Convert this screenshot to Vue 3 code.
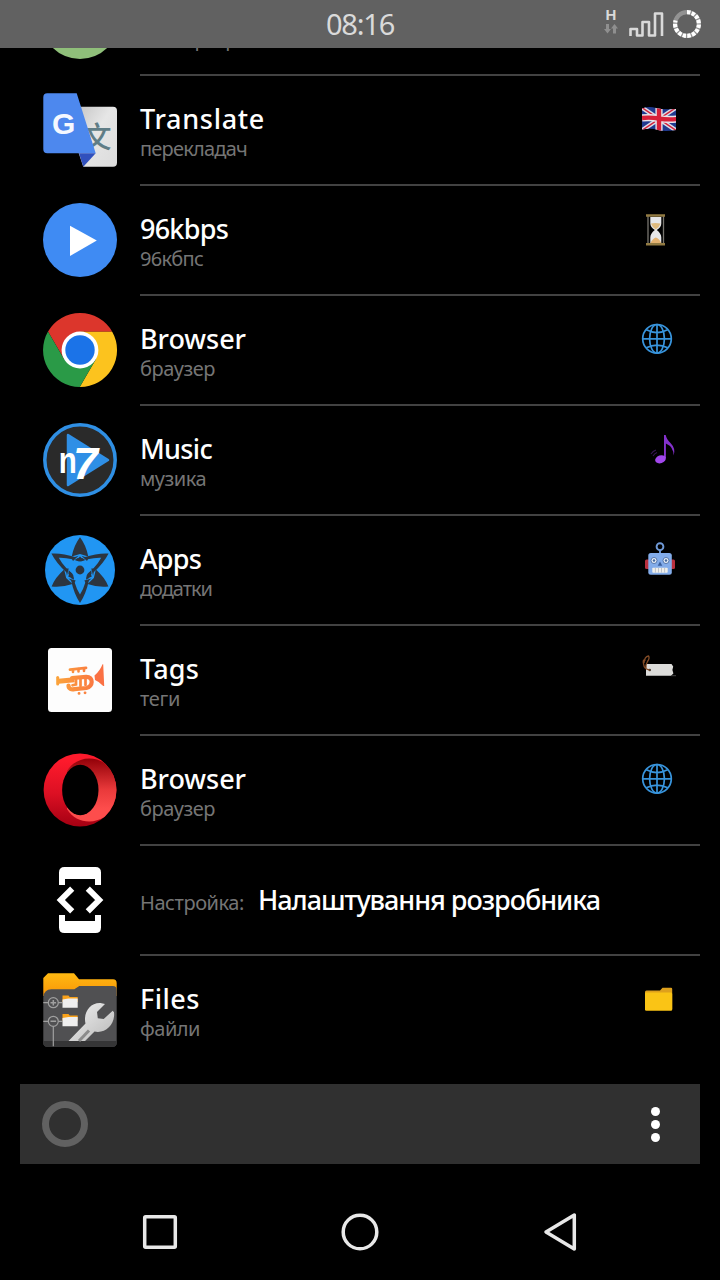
<script setup>
import { ref } from 'vue'

// titleWidth / noteWidth are the widths each label should fill, in px
const rows = ref([
  { id: 1, icon: 'green', title: '', note: 'конвертер', titleWidth: 0, noteWidth: 97, tag: null },
  { id: 2, icon: 'translate', title: 'Translate', note: 'перекладач', titleWidth: 125, noteWidth: 107, tag: 'flag' },
  { id: 3, icon: 'play', title: '96kbps', note: '96кбпс', titleWidth: 88, noteWidth: 63, tag: 'hourglass' },
  { id: 4, icon: 'chrome', title: 'Browser', note: 'браузер', titleWidth: 106, noteWidth: 75, tag: 'globe' },
  { id: 5, icon: 'n7', title: 'Music', note: 'музика', titleWidth: 72, noteWidth: 66, tag: 'note' },
  { id: 6, icon: 'star', title: 'Apps', note: 'додатки', titleWidth: 61, noteWidth: 72, tag: 'robot' },
  { id: 7, icon: 'trumpet', title: 'Tags', note: 'теги', titleWidth: 59, noteWidth: 40, tag: 'label' },
  { id: 8, icon: 'opera', title: 'Browser', note: 'браузер', titleWidth: 106, noteWidth: 75, tag: 'globe' },
  { id: 9, icon: 'dev', title: 'Налаштування розробника', note: 'Настройка:', titleWidth: 342, noteWidth: 104, inline: true, tag: null },
  { id: 10, icon: 'files', title: 'Files', note: 'файли', titleWidth: 60, noteWidth: 60, tag: 'folder' },
])

// spreads the letters so that the label takes the given width
const vFit = {
  mounted(el, { value }) {
    const count = el.textContent.length
    if (!value || !count) return
    const width = el.getBoundingClientRect().width
    el.style.letterSpacing = `${(value - width) / count}px`
  },
}
</script>

<template>
  <div class="screen">
    <header class="status">
      <span class="clock" v-fit="68">08:16</span>
      <div class="status-icons">
        <div class="net">
          <span class="net-type">H</span>
          <svg width="14" height="10" viewBox="0 0 14 10" fill="#8f8f8f">
            <path d="M2 0h3v5h2l-3.5 4.5L0 5h2z" />
            <path d="M9 9.500h3v-5h2L10.500 0 7 4.500h2z" />
          </svg>
        </div>
        <svg width="36" height="26" viewBox="0 0 36 26" fill="none" stroke="#dadada" stroke-width="2.600">
          <path d="M1.500 25v-7h6.500v6.500h5.500V11h6.500v13.500h6V2.500h7V25" stroke-linejoin="round" />
        </svg>
        <svg class="battery" width="30" height="30" viewBox="0 0 30 30" fill="none" stroke-width="4.200">
          <circle cx="15" cy="15" r="11.900" stroke="#929292" />
          <path d="M15 3.100A11.900 11.900 0 1 1 3.600 11.500" stroke="#fff" stroke-dasharray="3.500 1.250" />
        </svg>
      </div>
    </header>

    <main class="list">
      <div v-for="row in rows" :key="row.id" class="row">
        <div class="icon">
          <svg width="80" height="80" viewBox="0 0 80 80">
            <circle v-if="row.icon === 'green'" cx="40" cy="40" r="39" fill="#8fbf7a" />

            <g v-else-if="row.icon === 'translate'">
              <defs>
                <linearGradient id="paper" x1="0" y1="0" x2="1" y2="1">
                  <stop offset="0" stop-color="#c4c4c4" />
                  <stop offset=".45" stop-color="#e6e6e6" />
                  <stop offset="1" stop-color="#dcdcdc" />
                </linearGradient>
              </defs>
              <path d="M36 16.700h37a4 4 0 0 1 4 4v52a4 4 0 0 1-4 4H43.300L36 55z" fill="url(#paper)" />
              <text x="42.500" y="57.500" class="han">文</text>
              <path d="M7.300 3.300h29.400l19 60H7.300a4 4 0 0 1-4-4v-52a4 4 0 0 1 4-4z" fill="#4d88ee" />
              <path d="M39 63.300h16.700L43.300 76.700z" fill="#3050bd" />
              <text x="12" y="43.600" class="gee">G</text>
            </g>

            <g v-else-if="row.icon === 'play'">
              <circle cx="40" cy="40" r="37" fill="#3f8bf3" />
              <path d="M30 25.700l26.800 14.900L30 56z" fill="#fff" />
            </g>

            <g v-else-if="row.icon === 'chrome'">
              <path d="M8 21.500A37 37 0 0 1 72.200 21.700H40L24.150 49.150z" fill="#dc362c" />
              <path d="M72.200 21.700A37 37 0 0 1 39.750 77l16.100-27.850L40 21.700z" fill="#fcc31e" />
              <path d="M39.750 77A37 37 0 0 1 8 21.500l16.150 27.650h31.700z" fill="#2a9a47" />
              <circle cx="40" cy="40" r="18.400" fill="#fff" />
              <circle cx="40" cy="40" r="14.700" fill="#1b73e8" />
            </g>

            <g v-else-if="row.icon === 'n7'">
              <circle cx="40" cy="40" r="35.200" fill="#2a2a2a" stroke="#2f8fe4" stroke-width="3.500" />
              <path d="M28 15l40 25-40 25z" fill="#2f8fe6" stroke="#2f8fe6" stroke-width="2.500" stroke-linejoin="round" />
              <text x="18.700" y="52.700" class="n7-n" textLength="18" lengthAdjust="spacingAndGlyphs">n</text>
              <text x="33" y="58.500" class="n7-seven" textLength="25" lengthAdjust="spacingAndGlyphs">7</text>
            </g>

            <g v-else-if="row.icon === 'star'">
              <circle cx="40" cy="40" r="35" fill="#2196f3" />
              <g v-for="turn in [0, 120, 240]" :key="turn" :transform="`rotate(${turn} 40 40)`" fill="#2c3540">
                <path d="M40 7.200Q46 15 48.300 26.500L40 24l-8.300 2.500Q34 15 40 7.200z" />
                <path d="M31.500 28.300l7-2.500-5.500 5.200zM48.500 28.300l-7-2.500 5.500 5.200z" />
                <path d="M36 30.500l4-4 4 4-4-1.200z" />
                <path d="M40 73Q34 64 31 50l3.500 2Q36.500 59 40 64.500 43.500 59 45.500 52l3.500-2Q46 64 40 73z" />
                <path d="M30.700 48l-.7-6 3.200 3 .9 4.700zM49.300 48l.7-6-3.200 3-.9 4.700z" />
              </g>
              <circle cx="40" cy="40" r="4.400" fill="#2c3540" />
            </g>

            <g v-else-if="row.icon === 'trumpet'">
              <defs>
                <linearGradient id="brass" gradientUnits="userSpaceOnUse" x1="16" y1="0" x2="64" y2="0">
                  <stop offset="0" stop-color="#fba43a" />
                  <stop offset="1" stop-color="#fa6d45" />
                </linearGradient>
              </defs>
              <rect x="8" y="8" width="64" height="64" rx="3.500" fill="#fdfdfd" />
              <g fill="none" stroke="url(#brass)" stroke-linecap="round">
                <path d="M17.700 37.500v6.500" stroke-width="3" />
                <path d="M18.500 41.200l16-1.500" stroke-width="5" stroke-linecap="butt" />
                <path d="M28.500 45.500c0 3.500 3 4.200 6 3.600l12-1.100c6.500-1 7.500-11.500-.5-11.200L32 38" stroke-width="4.200" />
                <path d="M30 29.700l16-1.900" stroke-width="2.800" />
                <path d="M33 29.500v2.500M38.500 29v2.500M44 28.500v2.500" stroke-width="2.600" />
                <path d="M36 39v5.500l-3.500.8M40.500 39v7M45.500 39v6" stroke-width="2.700" />
                <path d="M39 53.400h.1M45 52.800h.1" stroke-width="2.800" />
              </g>
              <path d="M54.500 35.500q5.500-4.500 8-11.200h.7l1 21.700h-1Q59 41.500 55 40z" fill="#fa7144" />
            </g>

            <g v-else-if="row.icon === 'opera'">
              <defs>
                <linearGradient id="ringLeft" x1="0" y1="0" x2="0" y2="1">
                  <stop offset=".1" stop-color="#fd1a2c" />
                  <stop offset=".55" stop-color="#dc1023" />
                  <stop offset="1" stop-color="#a40012" />
                </linearGradient>
                <linearGradient id="ringRight" x1="0" y1="0" x2="0" y2="1">
                  <stop offset="0" stop-color="#920008" />
                  <stop offset=".5" stop-color="#ea3a3b" />
                  <stop offset=".8" stop-color="#fd4d4c" />
                </linearGradient>
              </defs>
              <circle cx="40" cy="40" r="36.400" fill="url(#ringLeft)" />
              <path d="M27 21C35 7.500 52 5 64.400 12.900a36.400 36.400 0 0 1 0 54.200C52 75 35 72.500 27 59z" fill="url(#ringRight)" />
              <ellipse cx="40.300" cy="40" rx="18.200" ry="25.200" fill="#000" />
            </g>

            <g v-else-if="row.icon === 'dev'">
              <path d="M19 25V12.500Q19 7 24.500 7h31Q61 7 61 12.500V25h-6v-6H25v6zM19 55v12.500q0 5.500 5.500 5.500h31q5.500 0 5.500-5.500V55h-6v6H25v-6z" fill="#fff" />
              <path d="M32.200 28.600L20.800 40l11.400 11.400M47.800 28.600L59.200 40 47.800 51.400" fill="none" stroke="#fff" stroke-width="5.900" />
            </g>

            <g v-else-if="row.icon === 'files'">
              <defs>
                <linearGradient id="steel" x1="0" y1="0" x2="1" y2="1">
                  <stop offset="0" stop-color="#f2f2f2" />
                  <stop offset="1" stop-color="#b8b8b8" />
                </linearGradient>
                <linearGradient id="amber" x1="0" y1="0" x2="0" y2="1">
                  <stop offset="0" stop-color="#ffb911" />
                  <stop offset="1" stop-color="#f99508" />
                </linearGradient>
              </defs>
              <path d="M3.300 8L8 3.300h26l5 6h34q3.700 0 3.700 4V26H3.300z" fill="url(#amber)" />
              <path d="M3.300 27q1-7.700 8-7.700h23l5-3.300h33.400q4 0 4 4v53q0 3.700-3.700 3.700H7q-3.700 0-3.700-3.700z" fill="#505052" />
              <path d="M3.300 71h73.400v2q0 3.700-3.700 3.700H7q-3.700 0-3.700-3.700z" fill="#353536" />
              <g fill="none" stroke="#a0a0a0" stroke-width="1.200">
                <path d="M3.300 32.700h5M18.300 32.700h4M3.300 51.300h5M18.300 51.300h4M13.300 56.300v20" />
                <circle cx="13.300" cy="32.700" r="5" />
                <circle cx="13.300" cy="51.300" r="5" />
                <path d="M10.500 32.700h5.600M13.300 29.900v5.600M10.500 51.300h5.600" stroke-width="1.500" />
              </g>
              <g v-for="y in [0, 18.500]" :key="y" :transform="`translate(0 ${y})`">
                <path d="M22.500 25.500h6l1.200 1.500h8v5H22.500z" fill="#f9a21b" />
                <path d="M22.500 29.500l6-1h9.200v9.200H22.500z" fill="#efefef" />
              </g>
              <path d="M28.500 71l17-17.500C43 43 50 32 61.500 33.200l3.500.8-8 8 .8 6.200 5.900.8 9-8.300 1.300 1.500C75.500 54 65.500 64 54.500 61.500L45 71z" fill="url(#steel)" />
              <path d="M39 71l10-10.500" stroke="#8b8b8b" stroke-width="3" />
            </g>
          </svg>
        </div>

        <div class="body" :class="{ inline: row.inline }">
          <div class="labels">
            <span v-fit="row.titleWidth" class="title">{{ row.title }}</span>
            <span v-fit="row.noteWidth" class="note">{{ row.note }}</span>
          </div>

          <svg v-if="row.tag" class="tag" width="40" height="40" viewBox="0 0 40 40">
            <g v-if="row.tag === 'flag'">
              <defs>
                <clipPath id="flagShape">
                  <path d="M2 8.500q7-2.500 14-.5t20 1v21q-11 2-18 0t-16-.5z" />
                </clipPath>
              </defs>
              <g clip-path="url(#flagShape)">
                <path d="M0 5h40v30H0z" fill="#203a8f" />
                <path d="M1 7l36 24M37 7L1 31" stroke="#dcdce6" stroke-width="4.400" />
                <path d="M1 7l36 24M37 7L1 31" stroke="#d3223c" stroke-width="1.500" />
                <path d="M2 18q8-1 17 .5t18 .5M19 5v28" fill="none" stroke="#e6e4ea" stroke-width="7.200" />
                <path d="M2 18q8-1 17 .5t18 .5M19 5v28" fill="none" stroke="#d81f38" stroke-width="4.400" />
              </g>
            </g>

            <g v-else-if="row.tag === 'hourglass'">
              <path d="M8 6v28M23.500 6v28" stroke="#77756f" stroke-width="1.300" />
              <path d="M10.300 7h11v6.500q0 3.500-4.500 6.500 4.500 3.500 4.500 7.500V33h-11v-5.500q0-4 4.500-7.500-4.500-3-4.500-6.500z" fill="#e6e7e9" />
              <path d="M11 13.500q4-1 9.500 0-1 3.500-4.700 6-3.800-2.500-4.800-6z" fill="#dfba7d" />
              <path d="M10.500 33q2-4.500 5.300-5.500 3.700 1 5.300 5.500z" fill="#e3b271" />
              <path d="M6 4.200h19v2.600H6zM6 33h19v2.600H6z" fill="#927b43" />
            </g>

            <g v-else-if="row.tag === 'globe'" fill="none" stroke="#3894dc" stroke-width="1.700">
              <circle cx="17" cy="18.800" r="14.300" />
              <ellipse cx="17" cy="18.800" rx="7.400" ry="14.300" />
              <path d="M17 4.500v28.600M2.700 18.800h28.600M6.300 9.800q10.700 5.500 21.400 0M6.300 27.800q10.700-5.500 21.400 0" />
            </g>

            <g v-else-if="row.tag === 'note'">
              <path d="M24 5h1.700q.8 4.500 5 8.200 5.500 5.600 2.800 12.300.3-8.500-7.600-12V28H24z" fill="#8431cc" />
              <ellipse cx="20.500" cy="29.300" rx="5.500" ry="3.900" fill="#a247ec" transform="rotate(-18 20.500 29.300)" />
              <path d="M11 24q2-3 5-4M13 26q1.500-2.500 4-3.500" fill="none" stroke="#381555" stroke-width="1.100" />
            </g>

            <g v-else-if="row.tag === 'robot'">
              <rect x="5" y="19.500" width="6" height="9.500" rx="1.500" fill="#b92f3e" />
              <rect x="29" y="19.500" width="6" height="9.500" rx="1.500" fill="#b92f3e" />
              <circle cx="20" cy="6.700" r="3.400" fill="none" stroke="#6f99d6" stroke-width="1.900" />
              <path d="M20 10v4" stroke="#6f99d6" stroke-width="1.900" />
              <rect x="8.300" y="12.900" width="23.500" height="21.800" rx="2.500" fill="#83ace9" />
              <g fill="#f2f6fb" stroke="#476a9f" stroke-width=".9">
                <circle cx="14" cy="20.500" r="3" />
                <circle cx="26" cy="20.500" r="3" />
              </g>
              <path d="M20 21.500l2.300 4.300h-4.600z" fill="#385d9b" />
              <circle cx="14" cy="20.500" r="1.300" fill="#476a9f" />
              <circle cx="26" cy="20.500" r="1.300" fill="#476a9f" />
              <rect x="12.300" y="27.800" width="15.400" height="4.900" rx=".8" fill="#f0efeb" />
              <path d="M15.400 28v4.500M18.500 28v4.500M21.500 28v4.500M24.600 28v4.500" stroke="#9ba5b5" stroke-width=".6" />
            </g>

            <g v-else-if="row.tag === 'label'">
              <path d="M6 14h25.500l1.700 2.500-.8 3.500 1 3.500-2.400 2.200H6z" fill="#dcdcda" />
              <path d="M31 25.700h5" stroke="#555" stroke-width=".8" />
              <circle cx="9.800" cy="20" r="1.200" fill="#4a3b31" />
              <path d="M9.500 20Q4 19 3.700 14.500 2.200 8.500 5.500 10.500M6 19q-.8-4 1.500-7.500 2.500-3.500 1-5.500-4 .5-4.500 7" fill="none" stroke="#824b26" stroke-width="1.300" />
            </g>

            <g v-else-if="row.tag === 'folder'">
              <path d="M5 12q0-1.500 1.500-1.500H20l2.500-2.800H31q1.200 0 1.200 1.300V29H5z" fill="#dea01c" />
              <rect x="5" y="12.600" width="27.200" height="18.200" rx="1.300" fill="#fac415" />
            </g>
          </svg>
        </div>
      </div>
    </main>

    <div class="search">
      <span class="ring"></span>
      <div class="more"><i></i><i></i><i></i></div>
    </div>

    <nav class="nav">
      <svg width="40" height="40" viewBox="0 0 40 40"><rect x="4.700" y="4.700" width="30.600" height="30.600" rx="1" /></svg>
      <svg width="40" height="40" viewBox="0 0 40 40"><circle cx="20" cy="20" r="16.800" /></svg>
      <svg width="40" height="40" viewBox="0 0 40 40"><path d="M6 20L34.300 3v34z" stroke-linejoin="round" /></svg>
    </nav>
  </div>
</template>

<style>
body {
  margin: 0;
  background: #000;
}
</style>

<style scoped>
.screen {
  display: flex;
  flex-direction: column;
  width: 720px;
  height: 1280px;
  overflow: hidden;
  background: #000;
  color: #fff;
  font-family: 'Noto Sans', 'Open Sans', sans-serif;
}

svg {
  display: block;
}

.status {
  display: grid;
  grid-template-columns: 1fr auto 1fr;
  align-items: center;
  flex: none;
  height: 48px;
  background: #616161;
}

.clock {
  grid-column: 2;
  color: #dadada;
  font-size: 29px;
  line-height: 48px;
}

.status-icons {
  display: flex;
  justify-content: flex-end;
  align-items: center;
  padding-right: 18px;
}

.net {
  display: flex;
  flex-direction: column;
  align-items: center;
  gap: 3px;
  margin: -5px 11px 0 0;
}

.net-type {
  color: #dadada;
  font: bold 15px/12px 'Liberation Sans', sans-serif;
}

.battery {
  margin-left: 7px;
}

/* scrolled to the end: older rows slide up under the status bar */
.list {
  display: flex;
  flex-direction: column;
  justify-content: flex-end;
  flex: none;
  box-sizing: border-box;
  height: 1036px;
  padding-bottom: 18px;
  overflow: hidden;
}

.row {
  display: grid;
  grid-template-columns: 140px 560px;
  flex: none;
  height: 110px;
}

.icon {
  padding: 14px 0 0 40px;
}

.body {
  display: flex;
  justify-content: space-between;
  box-sizing: border-box;
  border-bottom: 2px solid #424242;
  padding: 24px 20px 0 0;
}

.row:last-child .body {
  border-bottom-color: transparent;
}

.labels {
  display: flex;
  flex-direction: column;
  align-items: flex-start;
  white-space: nowrap;
}

.title {
  height: 36px;
  font-size: 27px;
  font-weight: 500;
  line-height: 38px;
}

.note {
  color: #757575;
  font-size: 20px;
  line-height: 26px;
}

.body.inline {
  padding-top: 35px;
}

.inline .labels {
  flex-direction: row-reverse;
  align-items: baseline;
  gap: 14px;
}

.han {
  fill: #607d86;
  font: 500 29px 'Noto Sans CJK SC', sans-serif;
}

.gee {
  fill: #f5f8ff;
  font: bold 30px 'Liberation Sans', sans-serif;
}

.n7-n {
  fill: #fff;
  font: bold 36px 'Liberation Sans', sans-serif;
}

.n7-seven {
  fill: #fff;
  font: italic bold 44px 'Liberation Sans', sans-serif;
}

.search {
  display: flex;
  justify-content: space-between;
  align-items: center;
  flex: none;
  box-sizing: border-box;
  height: 80px;
  margin: 0 20px;
  padding: 0 40px 0 22px;
  background: #303030;
}

.ring {
  box-sizing: border-box;
  width: 46px;
  height: 46px;
  border: 7px solid #616161;
  border-radius: 50%;
}

.more {
  display: flex;
  flex-direction: column;
  gap: 4px;
}

.more i {
  width: 9px;
  height: 9px;
  border-radius: 50%;
  background: #fff;
}

.nav {
  display: flex;
  justify-content: center;
  gap: 160px;
  flex: none;
  padding-top: 48px;
  fill: none;
  stroke: #e8e8e8;
  stroke-width: 3.500;
}
</style>
